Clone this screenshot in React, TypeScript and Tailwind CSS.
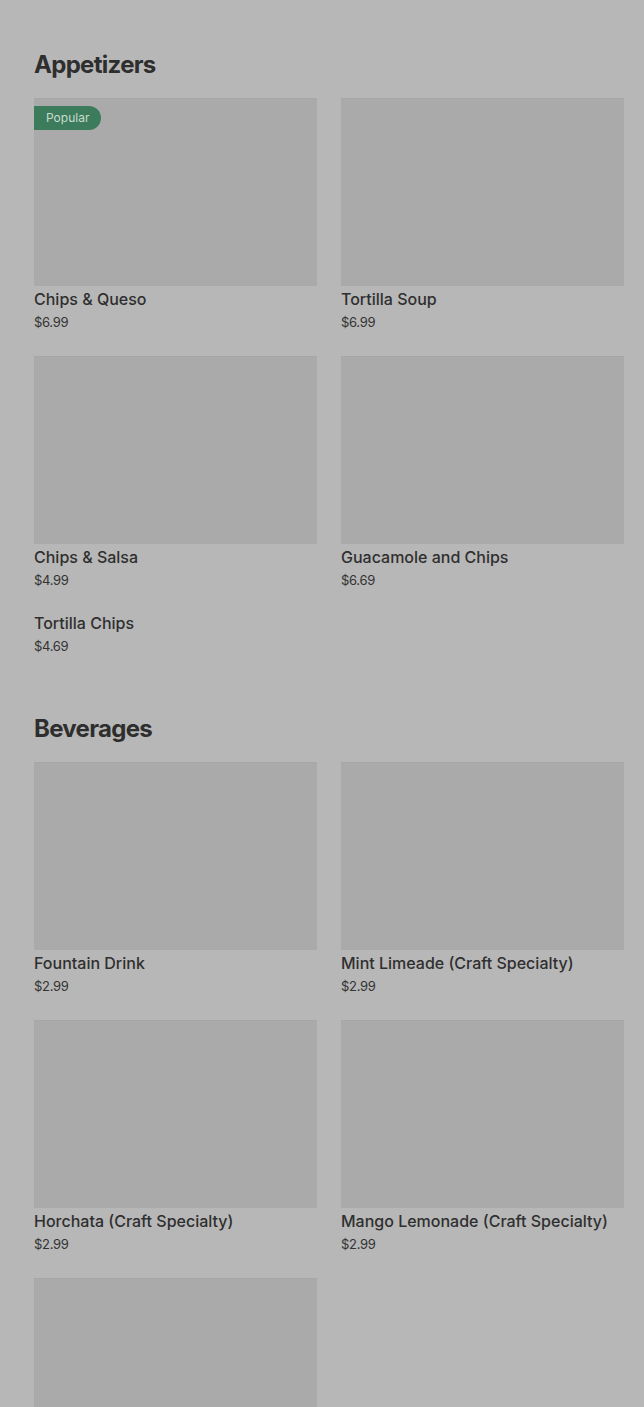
type Item = { name: string; price: string; image?: boolean; popular?: boolean };

const sections: { title: string; items: Item[] }[] = [
  {
    title: "Appetizers",
    items: [
      { name: "Chips & Queso", price: "$6.99", image: true, popular: true },
      { name: "Tortilla Soup", price: "$6.99", image: true },
      { name: "Chips & Salsa", price: "$4.99", image: true },
      { name: "Guacamole and Chips", price: "$6.69", image: true },
      { name: "Tortilla Chips", price: "$4.69" },
    ],
  },
  {
    title: "Beverages",
    items: [
      { name: "Fountain Drink", price: "$2.99", image: true },
      { name: "Mint Limeade (Craft Specialty)", price: "$2.99", image: true },
      { name: "Horchata (Craft Specialty)", price: "$2.99", image: true },
      { name: "Mango Lemonade (Craft Specialty)", price: "$2.99", image: true },
      { name: "Jarritos", price: "$2.99", image: true },
    ],
  },
];

function MenuItem({ item }: { item: Item }) {
  return (
    <div className="flex flex-col">
      {item.image && (
        <div className="relative h-[188px] w-full border-t border-[#a6a6a6] bg-[#aaaaaa]">
          {item.popular && (
            <span className="absolute left-0 top-[7px] flex h-6 items-center rounded-r-full bg-[#3c7b5b] pl-3 pr-3 text-[12px] text-[#c9dccf]">
              Popular
            </span>
          )}
        </div>
      )}
      <div className={item.image ? "pt-[3px]" : "-mt-px"}>
        <p className="text-[16px] leading-5 font-medium text-[#2f2f2f]">{item.name}</p>
        <p className="mt-[3px] text-[13px] leading-5 tracking-[-0.3px] text-[#333333]">{item.price}</p>
      </div>
    </div>
  );
}

export default function App() {
  return (
    <div
      className="min-h-screen overflow-hidden bg-[#b7b7b7] pl-[34px] pr-[20px]"
      style={{ fontFamily: "Inter, 'Noto Sans', sans-serif" }}
    >
      <div className="-mt-[11px] h-[14px] text-[12px] leading-[14px] text-[#a3a3a3]">Menu</div>
      {sections.map((s, i) => (
        <section key={s.title} className={i === 0 ? "pt-[46px]" : "pt-[57px]"}>
          <h2 className="mb-[17px] h-8 text-[24px] leading-8 font-bold tracking-[-0.7px] text-[#2e2e2e]">
            {s.title}
          </h2>
          <div className="grid grid-cols-2 gap-x-6 gap-y-6">
            {s.items.map((it) => (
              <MenuItem key={it.name} item={it} />
            ))}
          </div>
        </section>
      ))}
    </div>
  );
}
